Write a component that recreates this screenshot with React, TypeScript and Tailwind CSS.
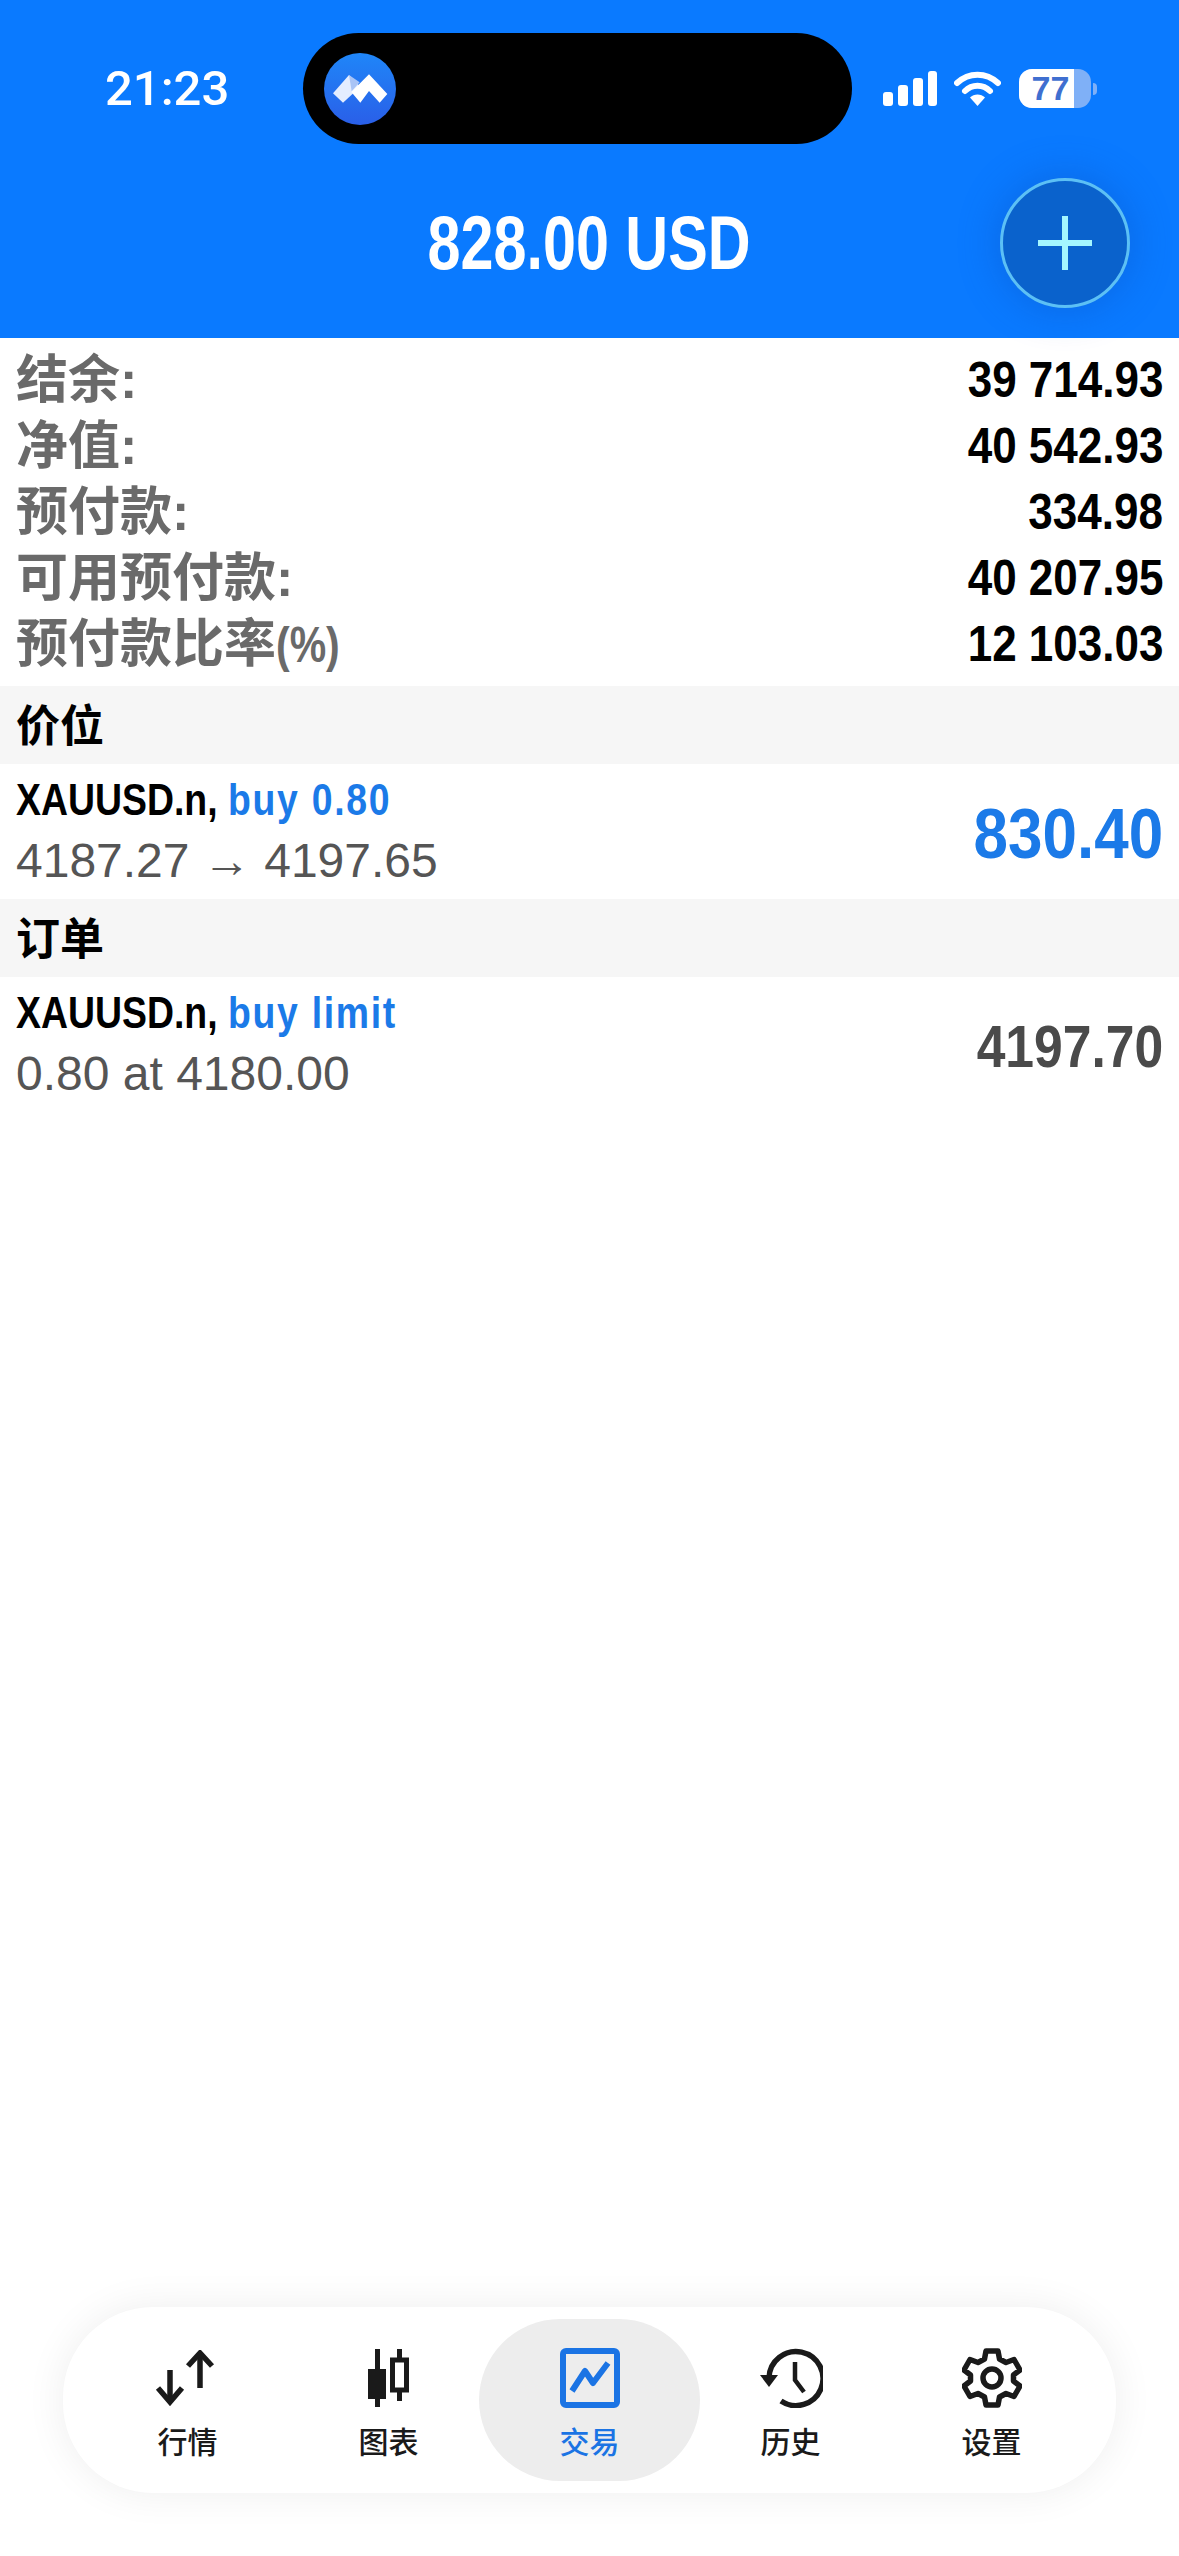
import React from 'react';

const stats = [
  { label: '结余:', value: '39 714.93' },
  { label: '净值:', value: '40 542.93' },
  { label: '预付款:', value: '334.98' },
  { label: '可用预付款:', value: '40 207.95' },
  { label: '预付款比率', suffix: '(%)', value: '12 103.03' },
];

const StatusIcons = () => (
  <div className="flex items-center ml-[31px]">
    <svg width="54" height="35" viewBox="0 0 54 35" fill="#fff">
      <rect x="0" y="21" width="10" height="14" rx="3" />
      <rect x="15" y="14" width="10" height="21" rx="3" />
      <rect x="30" y="7" width="10" height="28" rx="3" />
      <rect x="45" y="0" width="9" height="35" rx="3" />
    </svg>
    <svg className="ml-[17px]" width="47" height="35" viewBox="0 0 47 35">
      <path d="M3 12C15 1 32 1 44 12" fill="none" stroke="#fff" strokeWidth="6" strokeLinecap="round" />
      <path d="M11 20C18 13 29 13 36 20" fill="none" stroke="#fff" strokeWidth="6" strokeLinecap="round" />
      <path d="M16 26.500C20 22.500 27 22.500 31 26.500L23.500 35Z" fill="#fff" />
    </svg>
    <div className="relative ml-[18px] flex h-[39px] w-[72px] items-center overflow-hidden rounded-[13px] bg-[#7fb0f7]">
      <div className="flex h-full w-[55px] items-center justify-center bg-white pl-2 text-[34px] font-bold text-[#3f6fd0]">
        77
      </div>
    </div>
    <div className="ml-[2px] h-[12px] w-[4px] rounded-r-full bg-[#7fb0f7]" />
  </div>
);

const Logo = () => (
  <svg width="72" height="72" viewBox="103 99 216 216" className="ml-[21px]">
    <defs>
      <linearGradient id="logoBg" x1="0" y1="0" x2="0" y2="1">
        <stop offset="0" stopColor="#1f86f8" />
        <stop offset="1" stopColor="#2a5fe8" />
      </linearGradient>
    </defs>
    <circle cx="211" cy="207" r="108" fill="url(#logoBg)" />
    <path d="M130 220L178 165L212 200L160 248Z" fill="#e4edff" />
    <path d="M178 165L210 187L186 214Z" fill="#a9c4f6" />
    <path d="M185 216L238 163L293 222L270 248L238 213L212 248Z" fill="#fff" />
  </svg>
);

const MarketIcon = () => (
  <svg className="-translate-x-[3px]" width="60" height="56" viewBox="0 0 60 56" fill="none" stroke="#1a1a1a" strokeWidth="5.500">
    <path d="M15 20V52" />
    <path d="M3 38L15 52L27 38" />
    <path d="M45 3V38" />
    <path d="M33 16L45 3L57 16" />
  </svg>
);

const ChartIcon = () => (
  <svg width="42" height="58" viewBox="0 0 42 58" fill="none">
    <rect x="7" y="0" width="5" height="58" fill="#1a1a1a" />
    <rect x="0" y="20" width="18" height="30" fill="#1a1a1a" />
    <rect x="29" y="0" width="5" height="52" fill="#1a1a1a" />
    <rect x="24.500" y="11" width="14" height="30" fill="#fff" stroke="#1a1a1a" strokeWidth="5" />
  </svg>
);

const TradeIcon = () => (
  <svg width="60" height="60" viewBox="0 0 60 60" fill="none">
    <rect x="3" y="3" width="54" height="54" rx="3" stroke="#1b74e4" strokeWidth="6" />
    <path d="M12 43L25 23L33 35L48 15" stroke="#1b74e4" strokeWidth="6" strokeLinejoin="round" />
  </svg>
);

const HistoryIcon = () => (
  <svg width="64" height="60" viewBox="0 0 64 60" fill="none" stroke="#1a1a1a">
    <path d="M10 30A27 27 0 1 1 22 53" strokeWidth="5.500" />
    <path d="M1 27H19L10 39Z" fill="#1a1a1a" strokeWidth="0" />
    <path d="M36 14V32L45 44" strokeWidth="4.500" />
  </svg>
);

const SettingsIcon = () => (
  <svg width="60" height="60" viewBox="0 0 60 60" fill="none" stroke="#1a1a1a" strokeWidth="5.500" strokeLinejoin="round">
    <path d="M24 3H36L37.500 11L44 14.500L52 11.500L58 22L51.500 27V33L58 38L52 48.500L44 45.500L37.500 49L36 57H24L22.500 49L16 45.500L8 48.500L2 38L8.500 33V27L2 22L8 11.500L16 14.500L22.500 11Z" />
    <circle cx="30" cy="30" r="9" />
  </svg>
);

const navItems = [
  { label: '行情', icon: <MarketIcon /> },
  { label: '图表', icon: <ChartIcon /> },
  { label: '交易', icon: <TradeIcon />, active: true },
  { label: '历史', icon: <HistoryIcon /> },
  { label: '设置', icon: <SettingsIcon /> },
];

const SectionBand = ({ title }: { title: string }) => (
  <div className="flex h-[78px] items-center bg-[#f6f6f6] px-4 pt-[3px] text-[44px] font-bold text-black">{title}</div>
);

const TradeRow = ({
  action,
  detail,
  amount,
  amountClass,
}: {
  action: string;
  detail: string;
  amount: string;
  amountClass: string;
}) => (
  <div className="flex h-[135px] items-center justify-between px-4">
    <div className="flex flex-col">
      <div className="inline-block origin-left scale-x-[0.85] whitespace-nowrap text-[44px] leading-[58px] font-bold text-black">
        XAUUSD.n, <span className="tracking-[2px] text-[#1b7ae8]">{action}</span>
      </div>
      <div className="text-[48px] leading-[64px] text-[#555555]">{detail}</div>
    </div>
    <div className={`origin-right pt-[5px] font-bold ${amountClass}`}>{amount}</div>
  </div>
);

export default function App() {
  return (
    <div className="flex h-[2556px] w-[1179px] flex-col overflow-hidden bg-white font-['Liberation_Sans','Noto_Sans_CJK_SC',sans-serif]">
      <header className="relative flex h-[338px] flex-col bg-[#0a7aff]">
        <div className="flex items-center pt-[33px] pl-[105px]">
          <div className="w-[198px] font-['Roboto',sans-serif] text-[49px] leading-none font-medium text-white">21:23</div>
          <div className="flex h-[111px] w-[549px] items-center rounded-full bg-black">
            <Logo />
          </div>
          <StatusIcons />
        </div>
        <div className="flex flex-1 items-center justify-center pt-1">
          <div className="scale-x-[0.78] whitespace-nowrap text-[76px] leading-none font-bold text-white">828.00 USD</div>
        </div>
        <button className="absolute top-[178px] left-[1000px] flex h-[130px] w-[130px] items-center justify-center rounded-full border-[3px] border-[#5cc0f5] bg-[#0a62cc] shadow-[0_0_40px_rgba(10,80,190,0.45)]">
          <svg width="54" height="54" viewBox="0 0 54 54" fill="#a4f6ff">
            <rect x="24" y="0" width="6" height="54" />
            <rect x="0" y="24" width="54" height="6" />
          </svg>
        </button>
      </header>

      <section className="py-[9px]">
        {stats.map((row) => (
          <div key={row.label} className="flex h-[66px] items-center justify-between px-4">
            <span className="text-[52px] font-bold text-[#6a6a6a]">
              {row.label}
              {row.suffix && <span className="inline-block origin-left scale-x-[0.82] text-[50px]">{row.suffix}</span>}
            </span>
            <span className="origin-right scale-x-[0.88] text-[50px] font-bold text-black">{row.value}</span>
          </div>
        ))}
      </section>

      <SectionBand title="价位" />
      <TradeRow
        action="buy 0.80"
        detail="4187.27 → 4197.65"
        amount="830.40"
        amountClass="scale-x-[0.885] text-[70px] text-[#1b7ae8]"
      />
      <SectionBand title="订单" />
      <TradeRow
        action="buy limit"
        detail="0.80 at 4180.00"
        amount="4197.70"
        amountClass="scale-x-[0.875] text-[59px] text-[#4a4a4a]"
      />

      <div className="flex-1" />

      <nav className="mx-auto mb-[63px] flex h-[186px] w-[1053px] items-center justify-center rounded-[90px] bg-white shadow-[0_0_40px_rgba(0,0,0,0.07)]">
        {navItems.map((item) => (
          <div
            key={item.label}
            className={`flex h-[162px] flex-col items-center justify-center pt-[6px] ${
              item.active ? 'mx-[-10px] w-[221px] rounded-[100px] bg-[#ededed] text-[#1b74e4]' : 'w-[201px] text-[#1a1a1a]'
            }`}
          >
            <div className="flex h-[62px] items-center">{item.icon}</div>
            <div className="mt-[17px] text-[30px] leading-[34px] font-medium">{item.label}</div>
          </div>
        ))}
      </nav>
    </div>
  );
}
